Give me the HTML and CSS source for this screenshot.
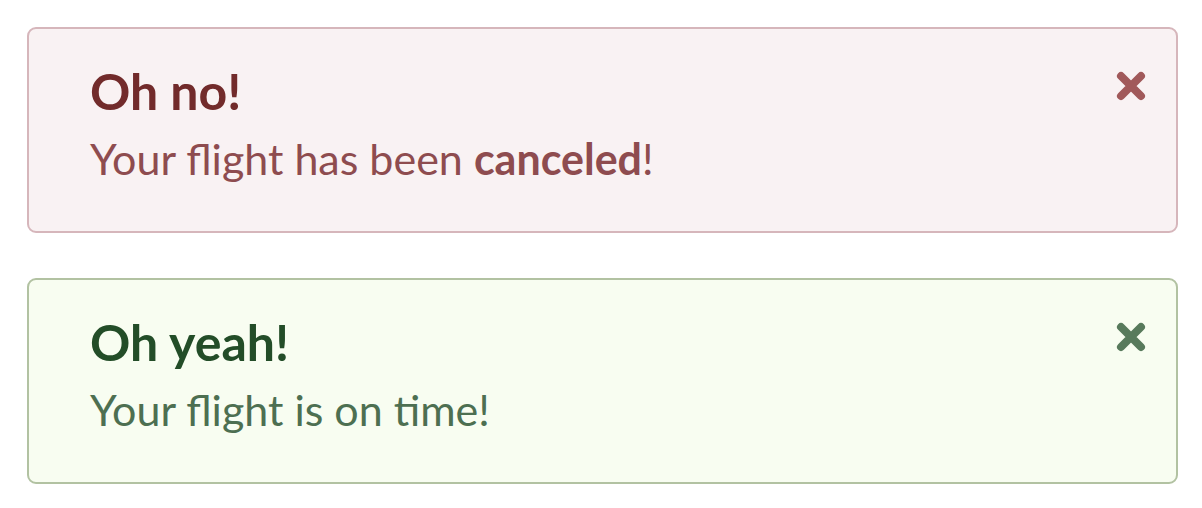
FILE: index.html
```html
<!DOCTYPE html>
<html>
<head>
<meta charset="utf-8">
<link rel="stylesheet" href="styles.css">
</head>
<body>
<div class="alerts">
  <div class="alert alert-error">
    <div class="alert-content">
      <h2 class="alert-title">Oh no!</h2>
      <p class="alert-text">Your flight has been <strong>canceled</strong>!</p>
    </div>
    <button class="alert-close" aria-label="Close">
      <svg viewBox="0 0 32 32" width="32" height="32"><path d="M6 6 L26 26 M26 6 L6 26" /></svg>
    </button>
  </div>
  <div class="alert alert-success">
    <div class="alert-content">
      <h2 class="alert-title">Oh yeah!</h2>
      <p class="alert-text">Your flight is on time!</p>
    </div>
    <button class="alert-close" aria-label="Close">
      <svg viewBox="0 0 32 32" width="32" height="32"><path d="M6 6 L26 26 M26 6 L6 26" /></svg>
    </button>
  </div>
</div>
</body>
</html>
```
FILE: styles.css
```css
html, body {
  margin: 0;
  padding: 0;
  background: #ffffff;
}
body {
  font-family: Lato, "Open Sans", sans-serif;
  padding: 27px 24px 0 27px;
}
.alerts {
  display: flex;
  flex-direction: column;
  gap: 45px;
}
.alert {
  display: flex;
  align-items: flex-start;
  border: 2px solid;
  border-radius: 9px;
  padding: 34px 29px 42px 61px;
  height: 206px;
  box-sizing: border-box;
}
.alert-content {
  flex: 1;
}
.alert-title {
  margin: 0;
  font-size: 50px;
  line-height: 56px;
  font-weight: 700;
}
.alert-text {
  margin: 12px 0 0;
  font-size: 43px;
  line-height: 56px;
  font-weight: 400;
}
.alert-text strong {
  font-weight: 700;
}
.alert-close {
  margin-top: 7px;
  padding: 0;
  border: 0;
  background: none;
  width: 32px;
  height: 32px;
  display: block;
}
.alert-close svg {
  display: block;
}
.alert-close path {
  fill: none;
  stroke: currentColor;
  stroke-width: 8;
  stroke-linecap: round;
}
.alert-error {
  background: #f9f2f3;
  border-color: #d6b6bb;
}
.alert-error .alert-title { color: #722b2b; }
.alert-error .alert-text { color: #8e4c4f; }
.alert-error .alert-close { color: #a1595a; }
.alert-success {
  background: #f8fdf1;
  border-color: #b2c2a2;
}
.alert-success .alert-title { color: #234d28; }
.alert-success .alert-text { color: #4d6f51; }
.alert-success .alert-close { color: #587a5c; }
```
